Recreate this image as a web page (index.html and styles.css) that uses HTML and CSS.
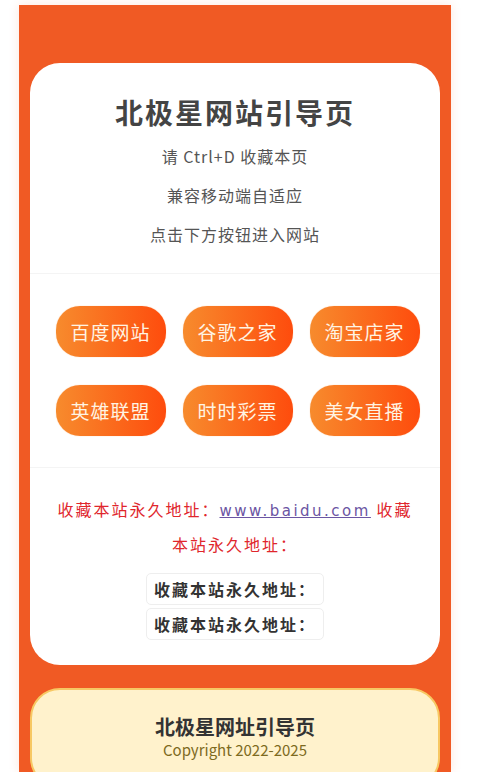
FILE: index.html
```html
<!DOCTYPE html>
<html lang="zh-CN">
<head>
    <meta charset="UTF-8">
    <meta name="viewport" content="width=device-width, initial-scale=1.0">
    <title>北极星网站引导页</title>
    <link rel="stylesheet" href="styles.css">
</head>
<body>
    <div class="page">
        <div class="card">
            <div class="intro">
                <h1>北极星网站引导页</h1>
                <p>请 Ctrl+D 收藏本页</p>
                <p>兼容移动端自适应</p>
                <p>点击下方按钮进入网站</p>
            </div>

            <div class="links">
                <a class="btn" href="#">百度网站</a>
                <a class="btn" href="#">谷歌之家</a>
                <a class="btn" href="#">淘宝店家</a>
                <a class="btn" href="#">英雄联盟</a>
                <a class="btn" href="#">时时彩票</a>
                <a class="btn" href="#">美女直播</a>
            </div>

            <div class="address">
                <p class="notice">收藏本站永久地址：<a href="#">www.baidu.com</a> 收藏本站永久地址：</p>
                <div class="tag">收藏本站永久地址：</div>
                <div class="tag">收藏本站永久地址：</div>
            </div>
        </div>

        <div class="footer">
            <h2>北极星网址引导页</h2>
            <p>Copyright 2022-2025</p>
        </div>
    </div>
</body>
</html>
```

FILE: styles.css
```css
body {
    margin: 0;
    background-color: #fff;
    font-family: "Noto Sans CJK SC", "Noto Sans", sans-serif;
    color: #555;
}
.page {
    width: 432px;
    height: 767px;
    margin: 5px 0 0 19px;
    padding: 58px 11px 0;
    box-sizing: border-box;
    background-color: #f05a24;
    box-shadow: 0 0 10px rgba(240, 90, 36, 0.15);
    overflow: hidden;
}
.card {
    background-color: #fff;
    border-radius: 30px;
}
.intro {
    text-align: center;
    padding: 28px 0 19px;
}
.intro h1 {
    margin: 0 0 4px;
    font-size: 28px;
    line-height: 42px;
    font-weight: bold;
    color: #444;
    letter-spacing: 2px;
}
.intro p {
    margin: 0;
    font-size: 16px;
    line-height: 39px;
    color: #555;
    letter-spacing: 1px;
}
.links {
    display: grid;
    grid-template-columns: repeat(3, 110px);
    justify-content: center;
    column-gap: 17px;
    row-gap: 28px;
    padding: 32px 0 31px 5px;
    border-top: 1px solid #f4f4f4;
    border-bottom: 1px solid #f4f4f4;
}
.btn {
    display: flex;
    align-items: center;
    justify-content: center;
    height: 51px;
    border-radius: 24px;
    background: linear-gradient(to right, #f78b2d, #fe4c0d);
    box-shadow: 0 0 1px rgba(250, 160, 90, 0.8);
    color: #fff4e3;
    font-size: 19px;
    letter-spacing: 1px;
    text-decoration: none;
}
.address {
    text-align: center;
    padding: 25px 24px 22px;
}
.notice {
    margin: 0 0 12px;
    font-size: 16px;
    line-height: 33px;
    color: #e0262c;
    letter-spacing: 2px;
}
.notice a {
    color: #6b55a3;
    font-family: "DejaVu Sans", sans-serif;
    font-size: 15px;
    letter-spacing: 2.5px;
}
.tag {
    display: block;
    width: fit-content;
    margin: 0 auto 3px;
    padding: 0 7px;
    height: 30px;
    line-height: 30px;
    border: 1px solid #eee;
    border-radius: 5px;
    font-size: 16px;
    font-weight: bold;
    color: #333;
    letter-spacing: 2px;
}
.footer {
    margin-top: 23px;
    height: 100px;
    padding-top: 24px;
    box-sizing: border-box;
    background-color: #fff2cc;
    border: 2px solid #f7c863;
    border-radius: 30px;
    text-align: center;
}
.footer h2 {
    margin: 0;
    font-size: 20px;
    line-height: 26px;
    color: #333;
}
.footer p {
    margin: 0;
    font-size: 15px;
    line-height: 20px;
    color: #7d6a1e;
}
```
